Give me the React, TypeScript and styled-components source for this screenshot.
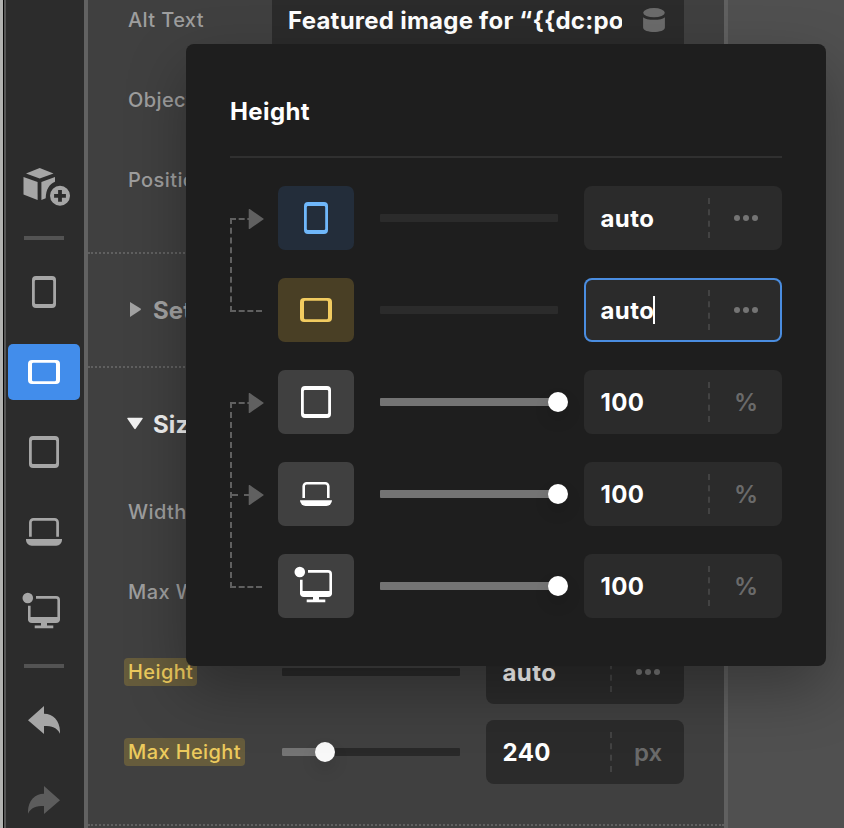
import React from 'react';
import styled, { createGlobalStyle } from 'styled-components';

const GlobalStyle = createGlobalStyle`
  * { box-sizing: border-box; }
  body {
    margin: 0;
    overflow: hidden;
    background: #505050;
    font-family: Inter, 'Liberation Sans', sans-serif;
  }
  svg { display: block; flex: none; }
`;

const Workspace = styled.div`
  position: relative;
  display: flex;
  width: 844px;
  height: 828px;
  overflow: hidden;
  background: #505050;
`;

const WindowEdge = styled.div`
  width: 6px;
  flex: none;
  background: #b2b3b1;
  border-right: 2px solid #565656;
  box-shadow: inset -1px 0 0 #050505;
`;

const Sidebar = styled.nav`
  display: flex;
  flex-direction: column;
  gap: 24px;
  flex: none;
  width: 82px;
  padding: 158px 4px 0 2px;
  background: #2c2c2c;
  border-right: 4px solid #626262;
`;

const SidebarButton = styled.button<{ $active?: boolean; $dim?: boolean }>`
  display: flex;
  align-items: center;
  justify-content: center;
  flex: none;
  width: 72px;
  height: 56px;
  padding: 0;
  border: 0;
  border-radius: 5px;
  background: ${(p) => (p.$active ? '#428deb' : 'transparent')};
  color: ${(p) => (p.$active ? '#fff' : p.$dim ? '#5c5c5c' : '#a6a6a6')};
`;

const SidebarDivider = styled.div<{ $tight?: boolean }>`
  flex: none;
  width: 40px;
  height: 4px;
  margin: ${(p) => (p.$tight ? '-2px' : '0')} 0 0 16px;
  background: #535353;
`;

const Panel = styled.section`
  flex: none;
  width: 640px;
  background: #404040;
  border-right: 4px solid #606060;
`;

const Section = styled.div<{ $raised?: boolean; $open?: boolean }>`
  margin-top: ${(p) => (p.$raised ? '-20px' : '0')};
  padding-bottom: ${(p) => (p.$open ? '32px' : '0')};
  border-bottom: 2px dotted #606060;
`;

const SectionHeader = styled.div<{ $open?: boolean }>`
  display: flex;
  align-items: center;
  gap: 10px;
  height: 112px;
  margin-bottom: ${(p) => (p.$open ? '-8px' : '0')};
  padding-left: 39px;
  color: ${(p) => (p.$open ? '#f2f2f2' : '#a3a3a3')};
  font-size: 24px;
  font-weight: 650;
  letter-spacing: 0.1px;
`;

const PropertyRow = styled.div`
  display: grid;
  grid-template-columns: 154px 178px 198px;
  column-gap: 0;
  align-items: center;
  height: 80px;
  padding-left: 40px;
  & > :nth-child(3) { margin-left: 26px; }
`;

const TextRow = styled.div`
  display: grid;
  grid-template-columns: 144px 412px;
  align-items: center;
  height: 80px;
  padding-left: 40px;
`;

const Label = styled.span<{ $changed?: boolean }>`
  justify-self: start;
  height: 28px;
  margin-left: ${(p) => (p.$changed ? '-4px' : '0')};
  padding: 0 ${(p) => (p.$changed ? '4px' : '0')};
  border-radius: 4px;
  background: ${(p) => (p.$changed ? '#665c3c' : 'transparent')};
  color: ${(p) => (p.$changed ? '#ecca5d' : '#9e9e9e')};
  font-size: 20px;
  font-weight: 450;
  line-height: 28px;
  letter-spacing: 0.4px;
  white-space: nowrap;
`;

const TextField = styled.div`
  display: flex;
  align-items: center;
  justify-content: space-between;
  height: 64px;
  padding: 0 18px 0 16px;
  border-radius: 8px;
  background: #2b2b2b;
  color: #6b6b6b;
`;

const TextValue = styled.span`
  width: 334px;
  padding-top: 2px;
  overflow: hidden;
  color: #fff;
  font-size: 24px;
  font-weight: 650;
  line-height: 36px;
  letter-spacing: 0.25px;
  white-space: nowrap;
`;

const Track = styled.div<{ $dark?: boolean }>`
  display: flex;
  align-items: center;
  width: 178px;
  height: 8px;
  border-radius: 1px;
  background: ${(p) => (p.$dark ? '#292929' : '#2b2b2b')};
`;

const Fill = styled.div`
  flex: none;
  height: 8px;
  border-radius: 1px 0 0 1px;
  background: #747474;
`;

const Thumb = styled.div<{ $muted?: boolean }>`
  flex: none;
  width: 20px;
  height: 20px;
  margin-left: -10px;
  border-radius: 50%;
  background: ${(p) => (p.$muted ? '#f8f8f8' : '#fff')};
  box-shadow: 0 8px 16px rgba(0, 0, 0, 0.12);
`;

const Field = styled.div<{ $focused?: boolean }>`
  display: flex;
  align-items: center;
  width: 198px;
  height: 64px;
  border-radius: 8px;
  background: #2b2b2b;
  box-shadow: ${(p) => (p.$focused ? 'inset 0 0 0 2px #4a8de0' : 'none')};
`;

const FieldValue = styled.div`
  display: flex;
  align-items: center;
  width: 124px;
  padding: 2px 0 0 16.500px;
  color: #fff;
  font-size: 24px;
  font-weight: 650;
  line-height: 32px;
  letter-spacing: 0.4px;
`;

const Caret = styled.span`
  width: 2px;
  height: 28px;
  margin: -2px 0 0 -1.500px;
  background: #fff;
`;

const FieldUnit = styled.div`
  display: flex;
  align-items: center;
  justify-content: center;
  width: 74px;
  height: 40px;
  border-left: 2px dashed #434343;
  color: #6a6a6a;
  font-size: 24px;
  font-weight: 600;
`;

const Dots = styled.span`
  display: flex;
  gap: 3px;
  &::before, &::after, & > i {
    content: '';
    width: 6px;
    height: 6px;
    border-radius: 50%;
    background: #747474;
  }
`;

const Popover = styled.div`
  position: absolute;
  left: 186px;
  top: 44px;
  width: 640px;
  height: 622px;
  padding: 0 44px;
  border-radius: 8px;
  background: #1e1e1e;
  box-shadow: 0 24px 60px rgba(0, 0, 0, 0.3);
`;

const PopoverTitle = styled.h2`
  height: 114px;
  margin: 0 0 28px;
  padding-top: 48px;
  border-bottom: 2px solid #303030;
  color: #fff;
  font-size: 24px;
  font-weight: 650;
  line-height: 40px;
  letter-spacing: 0.4px;
`;

const Group = styled.div`
  display: flex;
  margin-bottom: 28px;
`;

const GroupRows = styled.div`
  display: flex;
  flex-direction: column;
  gap: 28px;
`;

const DeviceRow = styled.div`
  display: flex;
  align-items: center;
  gap: 26px;
`;

const Connector = styled.div`
  position: relative;
  flex: none;
  width: 32px;
  margin: 32px 16px 30px 0;
  border: 2px dashed #606060;
  border-right: 0;
`;

const Arrow = styled.svg<{ $row: number }>`
  position: absolute;
  left: 16px;
  top: ${(p) => p.$row * 92 - 12}px;
`;

const Branch = styled.div`
  position: absolute;
  left: 0;
  top: 90px;
  width: 18px;
  border-top: 2px dashed #606060;
`;

type Tone = 'blue' | 'yellow' | 'plain';
const toneBackground: Record<Tone, string> = { blue: '#232d3a', yellow: '#493f25', plain: '#404040' };
const toneColor: Record<Tone, string> = { blue: '#6fb7fa', yellow: '#f1cb60', plain: '#ffffff' };

const DeviceTile = styled.div<{ $tone: Tone }>`
  display: flex;
  align-items: center;
  justify-content: center;
  width: 76px;
  height: 64px;
  border-radius: 7px;
  background: ${(p) => toneBackground[p.$tone]};
  color: ${(p) => toneColor[p.$tone]};
`;

const PhoneIcon = () => (
  <svg width="24" height="32" viewBox="0 0 24 32" fill="currentColor" fillRule="evenodd">
    <path d="M4 0h16a4 4 0 0 1 4 4v24a4 4 0 0 1-4 4H4a4 4 0 0 1-4-4V4a4 4 0 0 1 4-4ZM4 4a1.3 1.3 0 0 0-1.2 1.3v21.4A1.3 1.3 0 0 0 4 28h16a1.3 1.3 0 0 0 1.2-1.3V5.300A1.3 1.3 0 0 0 20 4Z" />
  </svg>
);

const PhoneLandscapeIcon = () => (
  <svg width="32" height="24" viewBox="0 0 32 24" fill="currentColor" fillRule="evenodd">
    <path d="M4 0h24a4 4 0 0 1 4 4v16a4 4 0 0 1-4 4H4a4 4 0 0 1-4-4V4a4 4 0 0 1 4-4ZM5.300 2.800A1.3 1.3 0 0 0 4 4v16a1.3 1.3 0 0 0 1.300 1.200h21.400A1.3 1.3 0 0 0 28 20V4a1.3 1.3 0 0 0-1.300-1.200Z" />
  </svg>
);

const TabletIcon = () => (
  <svg width="30" height="32" viewBox="0 0 30 32" fill="currentColor" fillRule="evenodd">
    <path d="M4 0h22a4 4 0 0 1 4 4v24a4 4 0 0 1-4 4H4a4 4 0 0 1-4-4V4a4 4 0 0 1 4-4ZM4 4a1.3 1.3 0 0 0-1.200 1.300v21.400A1.3 1.3 0 0 0 4 28h22a1.3 1.3 0 0 0 1.200-1.300V5.300A1.3 1.3 0 0 0 26 4Z" />
  </svg>
);

const LaptopIcon = ({ large = false }: { large?: boolean }) => (
  <svg width={large ? 36 : 32} height={large ? 28 : 24} viewBox={large ? '0 0 36 28' : '0 0 32 24'}>
    {large ? (
      <>
        <path d="M4.400 18.700V4.400a3 3 0 0 1 3-3h21.200a3 3 0 0 1 3 3v14.300" fill="none" stroke="currentColor" strokeWidth="2.700" />
        <path d="M0 21h36v1a5.700 5.700 0 0 1-5.700 5.700H5.700A5.700 5.700 0 0 1 0 22Z" fill="currentColor" />
      </>
    ) : (
      <>
        <path d="M3.700 16V4.300a3 3 0 0 1 3-3h18.600a3 3 0 0 1 3 3V16" fill="none" stroke="currentColor" strokeWidth="2.600" />
        <path d="M0 18.300h32a5.600 5.600 0 0 1-5.600 5.600H5.600A5.600 5.600 0 0 1 0 18.300Z" fill="currentColor" />
      </>
    )}
  </svg>
);

const DesktopIcon = () => (
  <svg width="44" height="40" viewBox="0 0 44 40">
    <circle cx="5.800" cy="6" r="5.300" fill="currentColor" />
    <path d="M14 5.350h20a2.700 2.700 0 0 1 2.700 2.700V27H7.300V13.800" fill="none" stroke="currentColor" strokeWidth="2.600" />
    <path d="M6 25h32v2a4 4 0 0 1-4 4h-9v2.500h6.300v2.800H12.700v-2.800H19V31h-9a4 4 0 0 1-4-4Z" fill="currentColor" />
  </svg>
);

const AddBlockIcon = () => (
  <svg width="52" height="42" viewBox="0 0 52 42" fill="currentColor">
    <g transform="translate(4 2)">
      <path d="M17.700 1 31.500 6.400 17.700 11.600 4 6.400Z" />
      <path d="M1.500 10 15.600 15v18L1.500 27.500Z" />
      <path d="M19.400 15 33 10v4.700C27.500 17 24 22 23.700 31.200L19.400 33Z" />
      <path
        fillRule="evenodd"
        d="M38 18.800a10 10 0 1 1 0 20 10 10 0 0 1 0-20Zm-1.900 4.100v4h-4v3.800h4v4h3.800v-4h4v-3.800h-4v-4Z"
      />
    </g>
  </svg>
);

const UndoIcon = ({ flipped = false }: { flipped?: boolean }) => (
  <svg width="32" height="28" viewBox="0 0 32 28" fill="currentColor">
    <path
      transform={flipped ? 'translate(32 0) scale(-1 1)' : undefined}
      d="M0 14.200 16 0v7.700C26 7.700 32.500 15.500 32 27.700 29 21.500 24 20 16 20v8Z"
    />
  </svg>
);

const DatabaseIcon = () => (
  <svg width="24" height="24" viewBox="0 0 24 24" fill="currentColor">
    <ellipse cx="12" cy="4.700" rx="10.800" ry="4.600" />
    <path d="M1.100 9.200C3.500 12.600 20.500 12.600 22.900 9.200V19.500C22.900 25.500 1.100 25.500 1.100 19.500Z" />
  </svg>
);

const Disclosure = ({ open = false }: { open?: boolean }) => (
  <svg width="16" height="16" viewBox="0 0 16 16" fill="currentColor">
    <path
      d={open ? 'M.8 1.800h14.400q1 0 .4.900L8.700 12.800q-.7.900-1.400 0L.4 2.700q-.6-.9.400-.9Z' : 'M3 0 13.600 6.600a.9.9 0 0 1 0 1.400L3 15Z'}
    />
  </svg>
);

const ArrowHead = ({ row }: { row: number }) => (
  <Arrow $row={row} width="17" height="22" viewBox="0 0 17 22" fill="#606060">
    <path d="M.7 1.600Q.7.500 1.700 1.100L15.300 10.400Q16.200 11 15.300 11.600L1.700 20.900Q.7 21.500.7 20.400Z" />
  </Arrow>
);

const Slider = ({ value, muted }: { value?: number; muted?: boolean }) => (
  <Track $dark={muted}>
    {value !== undefined && (
      <>
        <Fill style={{ width: `${value}%` }} />
        <Thumb $muted={muted} />
      </>
    )}
  </Track>
);

const ValueField = ({ value, unit, focused }: { value: string; unit?: string; focused?: boolean }) => (
  <Field $focused={focused}>
    <FieldValue>
      {value}
      {focused && <Caret />}
    </FieldValue>
    <FieldUnit>{unit ?? <Dots><i /></Dots>}</FieldUnit>
  </Field>
);

interface Device {
  name: string;
  tone: Tone;
  icon: React.ReactNode;
  value: string;
  unit?: string;
  percent?: number;
  focused?: boolean;
}

const mobileDevices: Device[] = [
  { name: 'phone', tone: 'blue', icon: <PhoneIcon />, value: 'auto' },
  { name: 'landscape', tone: 'yellow', icon: <PhoneLandscapeIcon />, value: 'auto', focused: true },
];

const wideDevices: Device[] = [
  { name: 'tablet', tone: 'plain', icon: <TabletIcon />, value: '100', unit: '%', percent: 100 },
  { name: 'laptop', tone: 'plain', icon: <LaptopIcon />, value: '100', unit: '%', percent: 100 },
  { name: 'desktop', tone: 'plain', icon: <DesktopIcon />, value: '100', unit: '%', percent: 100 },
];

const DeviceGroup = ({ devices, arrows }: { devices: Device[]; arrows: number[] }) => (
  <Group>
    <Connector>
      {arrows.length > 1 && <Branch />}
      {arrows.map((row) => <ArrowHead key={row} row={row} />)}
    </Connector>
    <GroupRows>
      {devices.map((d) => (
        <DeviceRow key={d.name}>
          <DeviceTile $tone={d.tone}>{d.icon}</DeviceTile>
          <Slider value={d.percent} />
          <ValueField value={d.value} unit={d.unit} focused={d.focused} />
        </DeviceRow>
      ))}
    </GroupRows>
  </Group>
);

export default function App() {
  return (
    <>
      <GlobalStyle />
      <Workspace>
        <WindowEdge />
        <Sidebar>
          <SidebarButton><AddBlockIcon /></SidebarButton>
          <SidebarDivider $tight />
          <SidebarButton><PhoneIcon /></SidebarButton>
          <SidebarButton $active><PhoneLandscapeIcon /></SidebarButton>
          <SidebarButton><TabletIcon /></SidebarButton>
          <SidebarButton><LaptopIcon large /></SidebarButton>
          <SidebarButton><DesktopIcon /></SidebarButton>
          <SidebarDivider />
          <SidebarButton><UndoIcon /></SidebarButton>
          <SidebarButton $dim><UndoIcon flipped /></SidebarButton>
        </Sidebar>
        <Panel>
          <Section $raised $open>
            <TextRow>
              <Label>Alt Text</Label>
              <TextField>
                <TextValue>Featured image for “&#123;&#123;dc:po</TextValue>
                <DatabaseIcon />
              </TextField>
            </TextRow>
            <TextRow><Label>Object Fit</Label></TextRow>
            <TextRow><Label>Position</Label></TextRow>
          </Section>
          <Section>
            <SectionHeader><Disclosure />Settings</SectionHeader>
          </Section>
          <Section $open>
            <SectionHeader $open><Disclosure open />Size</SectionHeader>
            <PropertyRow><Label>Width</Label></PropertyRow>
            <PropertyRow><Label>Max Width</Label></PropertyRow>
            <PropertyRow>
              <Label $changed>Height</Label>
              <Slider muted />
              <ValueField value="auto" />
            </PropertyRow>
            <PropertyRow>
              <Label $changed>Max Height</Label>
              <Slider muted value={24} />
              <ValueField value="240" unit="px" />
            </PropertyRow>
          </Section>
        </Panel>
        <Popover>
          <PopoverTitle>Height</PopoverTitle>
          <DeviceGroup devices={mobileDevices} arrows={[0]} />
          <DeviceGroup devices={wideDevices} arrows={[0, 1]} />
        </Popover>
      </Workspace>
    </>
  );
}
